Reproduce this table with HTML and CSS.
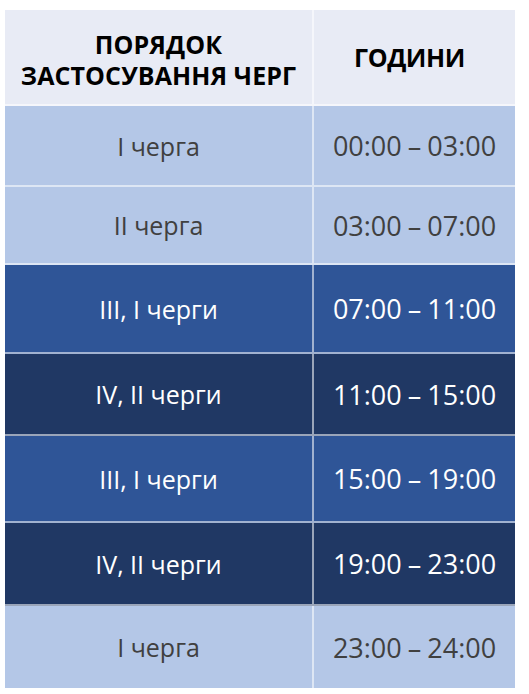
FILE: index.html
```html
<!DOCTYPE html>
<html lang="uk">
<head>
<meta charset="utf-8">
<title>Порядок застосування черг</title>
<link rel="stylesheet" href="styles.css">
</head>
<body>
<div class="table">
  <div class="cell head h-head first-head">ПОРЯДОК<br>ЗАСТОСУВАННЯ ЧЕРГ</div>
  <div class="cell head h-head last hours-head">ГОДИНИ</div>

  <div class="cell light r1">І черга</div>
  <div class="cell light r1 last time">00:00 – 03:00</div>

  <div class="cell light r2">ІІ черга</div>
  <div class="cell light r2 last time">03:00 – 07:00</div>

  <div class="cell mid r3">ІІІ, І черги</div>
  <div class="cell mid r3 last time">07:00 – 11:00</div>

  <div class="cell dark r4">IV, ІІ черги</div>
  <div class="cell dark r4 last time">11:00 – 15:00</div>

  <div class="cell mid r5">ІІІ, І черги</div>
  <div class="cell mid r5 last time">15:00 – 19:00</div>

  <div class="cell dark r6">IV, ІІ черги</div>
  <div class="cell dark r6 last time">19:00 – 23:00</div>

  <div class="cell light r7 end">І черга</div>
  <div class="cell light r7 end last time">23:00 – 24:00</div>
</div>
</body>
</html>
```

FILE: styles.css
```css
html, body {
  margin: 0;
  padding: 0;
  background: #ffffff;
}

body {
  padding: 10px 0 0 5px;
  font-family: "Open Sans", "Noto Sans", sans-serif;
}

.table {
  display: grid;
  grid-template-columns: 309px 201px;
  width: 510px;
}

.cell {
  display: flex;
  align-items: center;
  justify-content: center;
  text-align: center;
  box-sizing: border-box;
  border-right: 2px solid rgba(255, 255, 255, 0.55);
  border-bottom: 2px solid rgba(255, 255, 255, 0.55);
  font-size: 25px;
  letter-spacing: 0;
}

.cell.last {
  border-right: none;
}

.cell.end {
  border-bottom: none;
}

.head {
  background: #e8ebf5;
  color: #000000;
  font-weight: 700;
  font-size: 25px;
  line-height: 31px;
  letter-spacing: 0.1px;
}

.first-head {
  padding-top: 6px;
}

.hours-head {
  padding-right: 10px;
  letter-spacing: -0.4px;
}

.light {
  background: #b4c7e7;
  color: #404040;
}

.mid {
  background: #2f5597;
  color: #ffffff;
}

.dark {
  background: #203864;
  color: #ffffff;
}

.time {
  font-size: 27px;
  letter-spacing: 0;
  word-spacing: -1px;
}

.h-head { height: 96px; }
.r1 { height: 81px; }
.r2 { height: 78px; }
.r3 { height: 89px; }
.r4 { height: 82px; }
.r5 { height: 87px; }
.r6 { height: 83px; }
.r7 { height: 82px; }
```
